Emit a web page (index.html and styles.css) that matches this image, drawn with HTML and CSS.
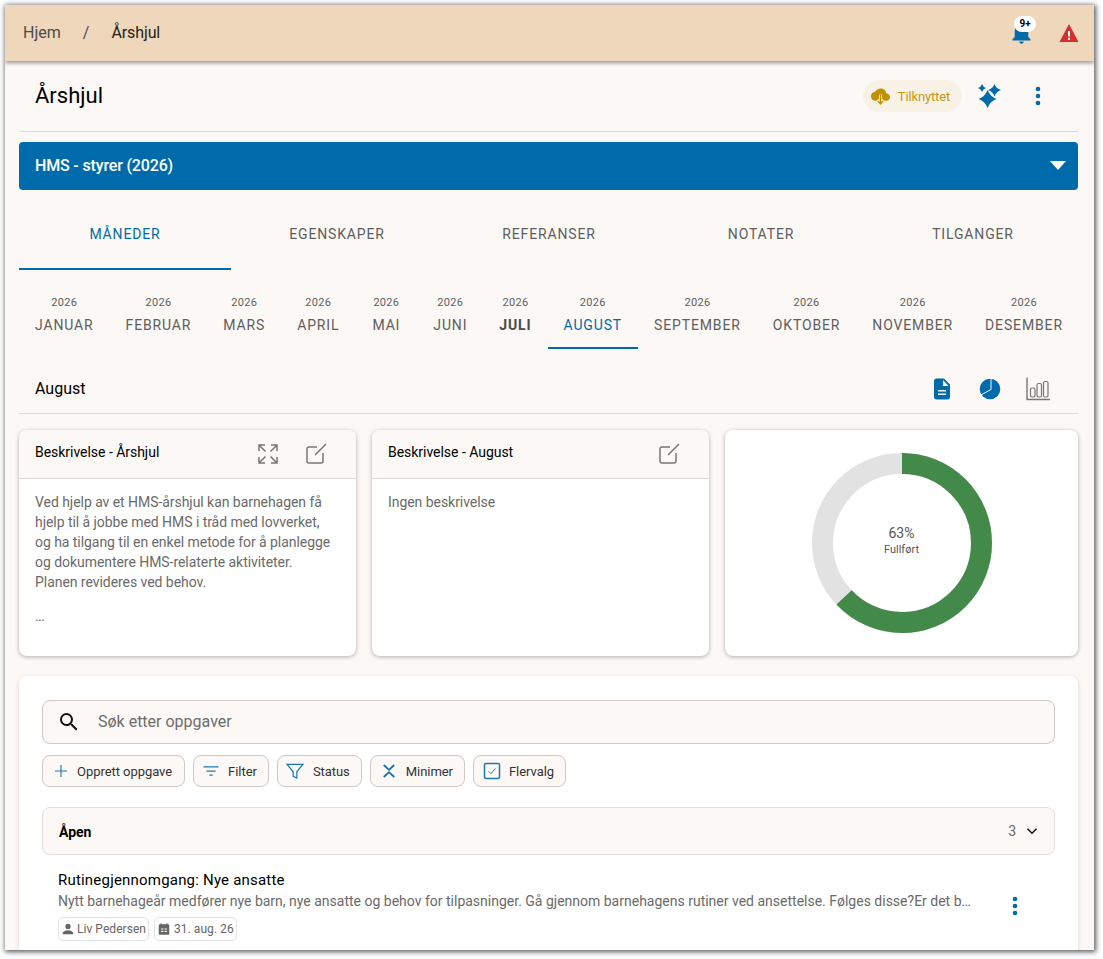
FILE: index.html
```html
<!DOCTYPE html>
<html lang="no">
<head>
<meta charset="utf-8">
<title>Årshjul</title>
<link rel="stylesheet" href="styles.css">
</head>
<body>
<div class="window">
  <header class="topbar">
    <nav class="crumbs"><span class="crumb-home">Hjem</span><span class="crumb-sep">/</span><span class="crumb-cur">Årshjul</span></nav>
    <div class="top-icons">
      <div class="bell">
        <svg class="bell-icon" viewBox="0 0 24 24"><path d="M12 22c1.100 0 2-.9 2-2h-4c0 1.100.9 2 2 2zm6-6v-5c0-3.070-1.630-5.640-4.500-6.320V4c0-.83-.67-1.500-1.500-1.500s-1.500.67-1.500 1.500v.68C7.640 5.360 6 7.920 6 11v5l-2 2v1h16v-1l-2-2z"/></svg>
        <span class="badge">9+</span>
      </div>
      <svg class="warn-icon" viewBox="0 0 24 24"><path fill="#d32f2f" d="M2.500 21h19L12 3z"/><path fill="#fff" d="M11 10h2v5.500h-2zM11 16.800h2v2h-2z"/></svg>
    </div>
  </header>
  <main class="content">
    <div class="title-row">
      <h1 class="page-title">Årshjul</h1>
      <div class="title-actions">
        <div class="chip-linked">
          <svg class="cloud" viewBox="0 0 24 24"><path d="M19.350 8.040A7.490 7.490 0 0 0 12 2C9.110 2 6.600 3.640 5.350 6.040A5.994 5.994 0 0 0 0 12c0 3.310 2.690 5.500 6 5.500h13c2.760 0 5-1.740 5-4.500 0-2.640-2.050-4.780-4.650-4.960z"/><path class="cloud-cut" d="M12 9.500V21M8 16.500l4 4.500 4-4.500"/><path class="cloud-arrow" d="M12 9.500V21M8.500 17.500L12 21.500l3.500-4"/></svg>
          <span>Tilknyttet</span>
        </div>
        <svg class="sparkle" viewBox="0 0 24 24"><path d="M9.600 6Q12.100 12.500 18.600 15 12.100 17.500 9.600 24 7.100 17.500.6 15 7.100 12.500 9.600 6zM4 0Q5 3 8 4 5 5 4 8 3 5 0 4 3 3 4 0zM16.500 0Q18 4.500 23 6 18 7.500 16.500 12.500 15 7.500 10 6 15 4.500 16.500 0z"/></svg>
        <svg class="dots" viewBox="0 0 24 24"><circle cx="12" cy="5" r="2.300"/><circle cx="12" cy="12" r="2.300"/><circle cx="12" cy="19" r="2.300"/></svg>
      </div>
    </div>
    <div class="selector"><span>HMS - styrer (2026)</span><i class="caret"></i></div>
    <div class="tabs">
      <div class="tab tab-active">MÅNEDER</div>
      <div class="tab">EGENSKAPER</div>
      <div class="tab">REFERANSER</div>
      <div class="tab">NOTATER</div>
      <div class="tab">TILGANGER</div>
    </div>
    <div class="months">
      <div class="month"><small>2026</small><span>JANUAR</span></div>
      <div class="month"><small>2026</small><span>FEBRUAR</span></div>
      <div class="month"><small>2026</small><span>MARS</span></div>
      <div class="month"><small>2026</small><span>APRIL</span></div>
      <div class="month month-mai"><small>2026</small><span>MAI</span></div>
      <div class="month"><small>2026</small><span>JUNI</span></div>
      <div class="month month-now"><small>2026</small><span>JULI</span></div>
      <div class="month month-active"><small>2026</small><span>AUGUST</span></div>
      <div class="month"><small>2026</small><span>SEPTEMBER</span></div>
      <div class="month"><small>2026</small><span>OKTOBER</span></div>
      <div class="month"><small>2026</small><span>NOVEMBER</span></div>
      <div class="month"><small>2026</small><span>DESEMBER</span></div>
    </div>
    <div class="month-head">
      <span class="month-name">August</span>
      <div class="month-icons">
        <svg class="ic-blue" viewBox="0 0 24 24"><path d="M14 1.500H6.500c-1.400 0-2.500 1.100-2.500 2.500v16c0 1.400 1.100 2.500 2.500 2.500h11c1.400 0 2.500-1.100 2.500-2.500V7.500l-6-6zm2 16.500H8v-1.500h8V18zm0-3.500H8V13h8v1.500zM13 9V3l5.500 6H13z"/></svg>
        <svg class="ic-pie" viewBox="0 0 24 24"><circle cx="12" cy="12" r="10.300"/><path class="pie-cut" d="M13 1v11.500L3 18"/></svg>
        <svg class="ic-gray" viewBox="0 0 24 24" fill="none"><path class="bar-axis" d="M1 .5V22.500H24"/><rect x="4.500" y="11" width="4.500" height="9" rx="1.500"/><rect x="11" y="6.500" width="4.500" height="13.500" rx="1.500"/><rect x="17.500" y="4.500" width="4.500" height="15.500" rx="1.500"/></svg>
      </div>
    </div>
    <section class="cards">
      <article class="card">
        <div class="card-head">
          <span class="card-title">Beskrivelse - Årshjul</span>
          <div class="card-tools">
            <svg class="tool" viewBox="0 0 24 24"><path d="M3 9V3h6M3 3l6.500 6.500M15 3h6v6M21 3l-6.500 6.500M3 15v6h6M3 21l6.500-6.500M21 15v6h-6M21 21l-6.500-6.500"/></svg>
            <svg class="tool" viewBox="0 0 24 24"><path d="M13 5H5a2 2 0 0 0-2 2v12a2 2 0 0 0 2 2h12a2 2 0 0 0 2-2v-8M11 13L22 2"/></svg>
          </div>
        </div>
        <div class="card-body">
          <p>Ved hjelp av et HMS-årshjul kan barnehagen få hjelp til å jobbe med HMS i tråd med lovverket, og ha tilgang til en enkel metode for å planlegge og dokumentere HMS-relaterte aktiviteter. Planen revideres ved behov.</p>
          <p class="ellipsis">...</p>
        </div>
      </article>
      <article class="card">
        <div class="card-head">
          <span class="card-title">Beskrivelse - August</span>
          <div class="card-tools">
            <svg class="tool" viewBox="0 0 24 24"><path d="M13 5H5a2 2 0 0 0-2 2v12a2 2 0 0 0 2 2h12a2 2 0 0 0 2-2v-8M11 13L22 2"/></svg>
          </div>
        </div>
        <div class="card-body"><p>Ingen beskrivelse</p></div>
      </article>
      <article class="card card-chart">
        <div class="donut">
          <svg viewBox="0 0 180 180">
            <circle class="donut-bg" cx="90" cy="90" r="79.500"/>
            <circle class="donut-fg" cx="90" cy="90" r="79.500" pathLength="100" stroke-dasharray="63 100" transform="rotate(-90 90 90)"/>
          </svg>
          <div class="donut-label"><b>63%</b><small>Fullført</small></div>
        </div>
      </article>
    </section>
    <section class="panel">
      <div class="search">
        <svg class="search-icon" viewBox="0 0 24 24"><path d="M15.500 14h-.79l-.28-.27A6.470 6.470 0 0 0 16 9.500 6.500 6.500 0 1 0 9.500 16c1.610 0 3.090-.59 4.230-1.570l.27.28v.79l5 4.990L20.490 19l-4.990-5zm-6 0C7.010 14 5 11.990 5 9.500S7.010 5 9.500 5 14 7.010 14 9.500 11.990 14 9.500 14z"/></svg>
        <span class="search-text">Søk etter oppgaver</span>
      </div>
      <div class="actions">
        <button class="act act-create"><svg viewBox="0 0 24 24"><path d="M12 4v16M4 12h16"/></svg>Opprett oppgave</button>
        <button class="act act-filter"><svg viewBox="0 0 24 24"><path d="M3 7h18M6.500 12h11M10 17h4"/></svg>Filter</button>
        <button class="act act-status"><svg viewBox="0 0 24 24"><path d="M2.500 4h19l-7.300 9v7.500l-4.400-2V13z"/></svg>Status</button>
        <button class="act act-min"><svg viewBox="0 0 24 24"><path d="M5 4l7 6.500L19 4M5 20l7-6.500 7 6.500"/></svg>Minimer</button>
        <button class="act act-multi"><svg viewBox="0 0 24 24"><rect x="2" y="2" width="20" height="20" rx="2"/><path class="thin" d="M7.500 12.500l3 3 6-7"/></svg>Flervalg</button>
      </div>
      <div class="group">
        <strong>Åpen</strong>
        <div class="group-right"><span>3</span><svg viewBox="0 0 24 24"><path d="M6 9l6 6 6-6"/></svg></div>
      </div>
      <div class="task">
        <div class="task-main">
          <div class="task-title">Rutinegjennomgang: Nye ansatte</div>
          <div class="task-desc">Nytt barnehageår medfører nye barn, nye ansatte og behov for tilpasninger. Gå gjennom barnehagens rutiner ved ansettelse. Følges disse?Er det behov for endringer i rutinene?</div>
          <div class="tags">
            <span class="tag tag-user"><svg viewBox="0 0 24 24"><path d="M12 12a4.500 4.500 0 1 0 0-9 4.500 4.500 0 0 0 0 9zm0 2c-3.300 0-9 1.700-9 5v2h18v-2c0-3.300-5.700-5-9-5z"/></svg>Liv Pedersen</span>
            <span class="tag tag-date"><svg viewBox="0 0 24 24"><path d="M19 4h-1V2h-2v2H8V2H6v2H5a2 2 0 0 0-2 2v14a2 2 0 0 0 2 2h14a2 2 0 0 0 2-2V6a2 2 0 0 0-2-2zM7 11h4v2H7zm6 0h4v2h-4zm-6 4h4v2H7zm6 0h4v2h-4z"/></svg>31. aug. 26</span>
          </div>
        </div>
        <svg class="dots task-dots" viewBox="0 0 24 24"><circle cx="12" cy="5" r="2.300"/><circle cx="12" cy="12" r="2.300"/><circle cx="12" cy="19" r="2.300"/></svg>
      </div>
    </section>
  </main>
</div>
</body>
</html>
```
FILE: styles.css
```css
* { box-sizing: border-box; }
html, body { margin: 0; height: 100%; overflow: hidden; background: #fff; }
body { padding: 5px 0 0 5px; font-family: Roboto, "Liberation Sans", sans-serif; color: #000; }
.window { width: 1089px; height: 945px; overflow: hidden; background: #fcf8f5; box-shadow: 1px 1px 5px 1px rgba(0,0,0,.65); display: flex; flex-direction: column; }

.topbar { flex: none; height: 56px; background: #eed7ba; box-shadow: 0 2px 4px rgba(0,0,0,.4); display: flex; align-items: center; justify-content: space-between; padding: 0 13px 1px 18px; position: relative; z-index: 2; }
.crumbs { display: flex; font-size: 16px; color: #4a4a4a; }
.crumb-sep { margin: 0 22px; }
.crumb-cur { color: #222; letter-spacing: -.1px; }
.top-icons { display: flex; align-items: center; gap: 23px; }
.bell { position: relative; width: 24px; height: 24px; }
.bell-icon { width: 27px; height: 27px; fill: #006baa; display: block; margin: -2px 0 0 -2px; }
.badge { position: absolute; top: -5px; left: 4px; width: 22px; height: 16px; border-radius: 8px; background: #fff; font-size: 10px; font-weight: 700; text-align: center; line-height: 15px; }
.warn-icon { width: 24px; height: 24px; display: block; margin-top: 1px; }

.content { flex: 1; padding: 0 16px 0 14px; min-height: 0; }
.title-row { height: 71px; border-bottom: 1px solid #e0d8d3; display: flex; align-items: center; justify-content: space-between; padding: 0 28px 0 16px; }
.page-title { margin: 0; font-size: 22px; font-weight: 400; line-height: 30px; }
.title-actions { display: flex; align-items: center; }
.chip-linked { display: flex; align-items: center; gap: 8px; height: 32px; padding: 0 12px 0 8px; border-radius: 16px; background: #f8f1e6; color: #c8970f; font-size: 13px; letter-spacing: -.15px; }
.cloud { width: 19px; height: 19px; fill: #c09000; }
.cloud-cut { stroke: #f8f1e6; stroke-width: 4; fill: none; }
.cloud-arrow { stroke: #c09000; stroke-width: 1.800; fill: none; }
.sparkle { width: 24px; height: 24px; fill: #006baa; margin-left: 16px; }
.dots { width: 24px; height: 24px; fill: #006baa; margin-left: 24px; }

.selector { margin-top: 10px; height: 48px; background: #006baa; color: #fff; border-radius: 4px; display: flex; align-items: center; justify-content: space-between; padding: 0 12px 1px 16px; font-size: 16px; font-weight: 500; letter-spacing: -.16px; }
.caret { width: 0; height: 0; border-left: 8px solid transparent; border-right: 8px solid transparent; border-top: 9px solid #fff; }

.tabs { display: grid; grid-template-columns: repeat(5, 212px); height: 80px; }
.tab { display: flex; align-items: center; justify-content: center; font-size: 14px; letter-spacing: .85px; color: #5e5e5e; padding-top: 8px; }
.tab-active { color: #006baa; border-bottom: 2px solid #006baa; padding-top: 10px; }

.months { display: flex; margin-top: 20px; height: 59px; }
.month { display: flex; flex-direction: column; align-items: center; justify-content: flex-start; padding: 6px 16px 0; color: #5e5e5e; }
.month small { font-size: 11px; line-height: 13px; letter-spacing: .3px; }
.month span { font-size: 14px; line-height: 20px; margin-top: 6px; letter-spacing: .86px; }
.month-mai { padding: 6px 17px 0; }
.month-now span { font-weight: 700; color: #4a4a4a; }
.month-active { border-bottom: 2px solid #006baa; }
.month-active span { color: #006baa; }

.month-head { margin-top: 16px; height: 49px; border-bottom: 1px solid #e0d8d3; display: flex; align-items: center; justify-content: space-between; padding: 0 28px 0 16px; font-size: 16px; }
.month-name { margin-top: -2px; }
.month-icons { display: flex; align-items: center; gap: 24px; }
.month-icons svg { width: 24px; height: 24px; display: block; }
.ic-blue { fill: #006baa; }
.ic-pie { fill: #006baa; }
.pie-cut { fill: none; stroke: #fcf8f5; stroke-width: 1; }
.ic-gray { stroke: #777; stroke-width: 1.200; }
.bar-axis { stroke-width: 1.400; }

.cards { display: grid; grid-template-columns: 337px 337px 353px; gap: 16px; margin-top: 16px; }
.card { height: 226px; background: #fff; border-radius: 8px; box-shadow: 0 1px 4px rgba(0,0,0,.3); overflow: hidden; }
.card-head { height: 49px; background: #fcf8f5; border-bottom: 1px solid #e0d8d3; display: flex; align-items: center; justify-content: space-between; padding: 0 28px 0 16px; }
.card-title { font-size: 14px; letter-spacing: -.03px; margin-top: -4px; }
.card-tools { display: flex; gap: 24px; align-items: center; margin-top: -1px; }
.tool { width: 24px; height: 24px; fill: none; stroke: #777; stroke-width: 1.500; display: block; }
.card-body { padding: 13px 20px 13px 16px; font-size: 14px; line-height: 20px; color: #6a6a6a; letter-spacing: -.05px; }
.card-body p { margin: 0; }
.card-body .ellipsis { margin-top: 14px; letter-spacing: -.6px; }
.card-chart { display: flex; align-items: center; justify-content: center; }
.donut { position: relative; width: 180px; height: 180px; }
.donut svg { width: 180px; height: 180px; display: block; }
.donut circle { fill: none; stroke-width: 21; }
.donut-bg { stroke: #e2e2e2; }
.donut-fg { stroke: #43894a; }
.donut-label { position: absolute; inset: 0; display: flex; flex-direction: column; align-items: center; justify-content: center; color: #555; padding-bottom: 5px; }
.donut-label b { font-size: 14px; font-weight: 400; line-height: 19px; }
.donut-label small { font-size: 11px; line-height: 14px; }

.panel { margin-top: 20px; height: 300px; background: #fff; border-radius: 8px; box-shadow: 0 1px 4px rgba(0,0,0,.15); padding: 24px 23px; }
.search { height: 44px; background: #fcf8f5; border: 1px solid #cfc9c5; border-radius: 8px; display: flex; align-items: center; padding: 0 14px; font-size: 16px; color: #6d6d6d; gap: 17px; }
.search-text { margin-top: -2px; }
.search-icon { width: 24px; height: 24px; fill: #111; flex: none; }
.actions { display: flex; gap: 8px; margin-top: 11px; }
.act { height: 32px; padding: 0 11px 0 9px; display: flex; align-items: center; gap: 7px; background: #fcf8f5; border: 1px solid #cfc9c5; border-radius: 8px; font: 400 13px Roboto, "Liberation Sans", sans-serif; letter-spacing: -.05px; color: #333; }
.act svg { width: 18px; height: 18px; fill: none; stroke: #1c79b2; stroke-width: 1.500; flex: none; }
.act .thin { stroke-width: 1.300; }
.act-create { padding-right: 12px; }
.act-filter { padding-left: 7px; }
.act-filter svg { width: 20px; height: 20px; }
.act-status { padding-left: 7px; gap: 8px; }
.act-status svg { width: 20px; height: 20px; }
.act-min { gap: 8px; }
.act-min svg { stroke-width: 2.400; stroke: #1572ab; }
.act-multi { gap: 8px; }
.act-multi svg { stroke-width: 2; }
.group { margin-top: 20px; height: 48px; background: #fcf8f5; border: 1px solid #e5dfda; border-radius: 8px; display: flex; align-items: center; justify-content: space-between; padding: 2px 13px 0 16px; font-size: 14px; }
.group-right { display: flex; align-items: center; gap: 7px; color: #666; margin-top: -2px; }
.group-right svg { width: 18px; height: 18px; fill: none; stroke: #111; stroke-width: 2; }
.task { display: flex; align-items: center; padding: 16px 28px 0 16px; gap: 31px; }
.task-main { flex: 1; min-width: 0; }
.task-title { font-size: 15px; line-height: 18px; letter-spacing: .2px; }
.task-desc { font-size: 14px; line-height: 20px; margin-top: 2px; color: #6a6a6a; white-space: nowrap; overflow: hidden; text-overflow: ellipsis; }
.tags { display: flex; gap: 5px; margin-top: 6px; }
.tag { display: flex; align-items: center; height: 24px; padding: 0 2px; border: 1px solid #e2e2e2; border-radius: 5px; font-size: 12px; color: #666; letter-spacing: .05px; }
.tag svg { width: 14px; height: 14px; fill: #666; }
.tag-user { gap: 2px; }
.tag-date { gap: 3px; }
.task-dots { margin: 0; flex: none; }
```
